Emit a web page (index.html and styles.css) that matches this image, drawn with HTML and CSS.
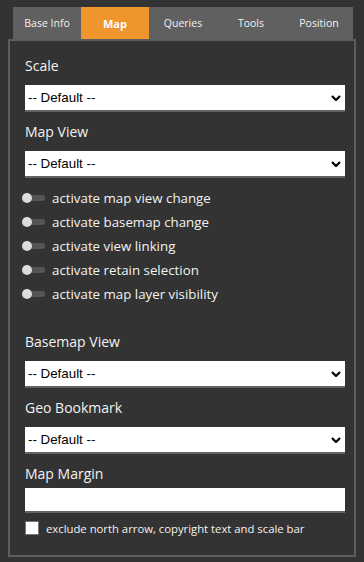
FILE: index.html
```html
<!DOCTYPE html>
<html lang="en">
<head>
  <meta charset="UTF-8" />
  <meta name="viewport" content="width=device-width, initial-scale=1" />
  <title>Map Settings</title>
  <link rel="stylesheet" href="styles.css">
</head>
<body>

<div class="tabs">
  <div class="tab">Base Info</div>
  <div class="tab active">Map</div>
  <div class="tab">Queries</div>
  <div class="tab">Tools</div>
  <div class="tab">Position</div>
</div>

<div class="panel">

  <label class="field-label">Scale</label>
  <div class="select-wrap">
    <select><option>-- Default --</option></select>
    <svg class="chevron" width="10" height="6" viewBox="0 0 10 6"><polyline points="1,1 5,5 9,1" fill="none" stroke="#000" stroke-width="2.2"/></svg>
  </div>

  <label class="field-label">Map View</label>
  <div class="select-wrap">
    <select><option>-- Default --</option></select>
    <svg class="chevron" width="10" height="6" viewBox="0 0 10 6"><polyline points="1,1 5,5 9,1" fill="none" stroke="#000" stroke-width="2.2"/></svg>
  </div>

  <div class="toggles">
    <div class="toggle-row"><span class="toggle"><span class="knob"></span></span>activate map view change</div>
    <div class="toggle-row"><span class="toggle"><span class="knob"></span></span>activate basemap change</div>
    <div class="toggle-row"><span class="toggle"><span class="knob"></span></span>activate view linking</div>
    <div class="toggle-row"><span class="toggle"><span class="knob"></span></span>activate retain selection</div>
    <div class="toggle-row"><span class="toggle"><span class="knob"></span></span>activate map layer visibility</div>
  </div>

  <label class="field-label">Basemap View</label>
  <div class="select-wrap">
    <select><option>-- Default --</option></select>
    <svg class="chevron" width="10" height="6" viewBox="0 0 10 6"><polyline points="1,1 5,5 9,1" fill="none" stroke="#000" stroke-width="2.2"/></svg>
  </div>

  <label class="field-label">Geo Bookmark</label>
  <div class="select-wrap">
    <select><option>-- Default --</option></select>
    <svg class="chevron" width="10" height="6" viewBox="0 0 10 6"><polyline points="1,1 5,5 9,1" fill="none" stroke="#000" stroke-width="2.2"/></svg>
  </div>

  <label class="field-label tight">Map Margin</label>
  <input type="text" class="text-input" />

  <label class="check-row">
    <span class="checkbox"></span>
    exclude north arrow, copyright text and scale bar
  </label>

</div>

</body>
</html>
```

FILE: styles.css
```css
body { margin: 0; padding: 7px 0 0; background: #333333; color: #f2f2f2; font-family: "Open Sans", sans-serif; }

.tabs { display: flex; margin: 0 11px 0 13px; background: #606060; height: 32px; }
.tab { width: 68px; display: flex; align-items: center; justify-content: center; font-size: 10.5px; color: #f2f2f2; }
.tab.active { background: #ee952d; color: #fff; font-weight: bold; font-size: 11px; }

.panel {
  margin: 0 8px;
  border: 2px solid #5c5c5c;
  padding: 15px 9px 20px 15px;
}

.field-label { display: block; font-size: 14px; line-height: 20px; margin-bottom: 9px; }
.field-label.tight { margin-bottom: 4px; }

.select-wrap { position: relative; margin-bottom: 10px; }
.select-wrap select {
  display: block;
  width: 100%;
  height: 27px;
  appearance: none;
  -webkit-appearance: none;
  background: #fff;
  border: none;
  border-bottom: 2px solid #636363;
  border-radius: 0;
  padding: 0 0 0 3px;
  font-family: "Liberation Sans", Arial, sans-serif;
  font-size: 13.333px;
  color: #000;
  outline: none;
}
.chevron { position: absolute; right: 4px; top: 10px; pointer-events: none; }

/* sits 8px under the select above (its 10px margin collapses with this one) */
.toggles { margin: -2px 0 26px -3px; }
.toggle-row { display: flex; align-items: center; height: 24px; font-size: 13.3px; }
.toggle { position: relative; width: 23px; height: 6px; background: #555555; border-radius: 3px; margin-right: 7px; }
.knob { position: absolute; left: 0; top: -2px; width: 10px; height: 10px; border-radius: 50%; background: #dcdcdc; }

.text-input {
  display: block;
  width: 100%;
  height: 25px;
  box-sizing: border-box;
  background: #fff;
  border: none;
  border-bottom: 2px solid #636363;
  margin-bottom: 8px;
  outline: none;
}

.check-row { display: flex; align-items: center; font-size: 11.3px; height: 14px; }
.checkbox { width: 12px; height: 12px; background: #fff; border: 1px solid #777; margin-right: 7px; }
```
